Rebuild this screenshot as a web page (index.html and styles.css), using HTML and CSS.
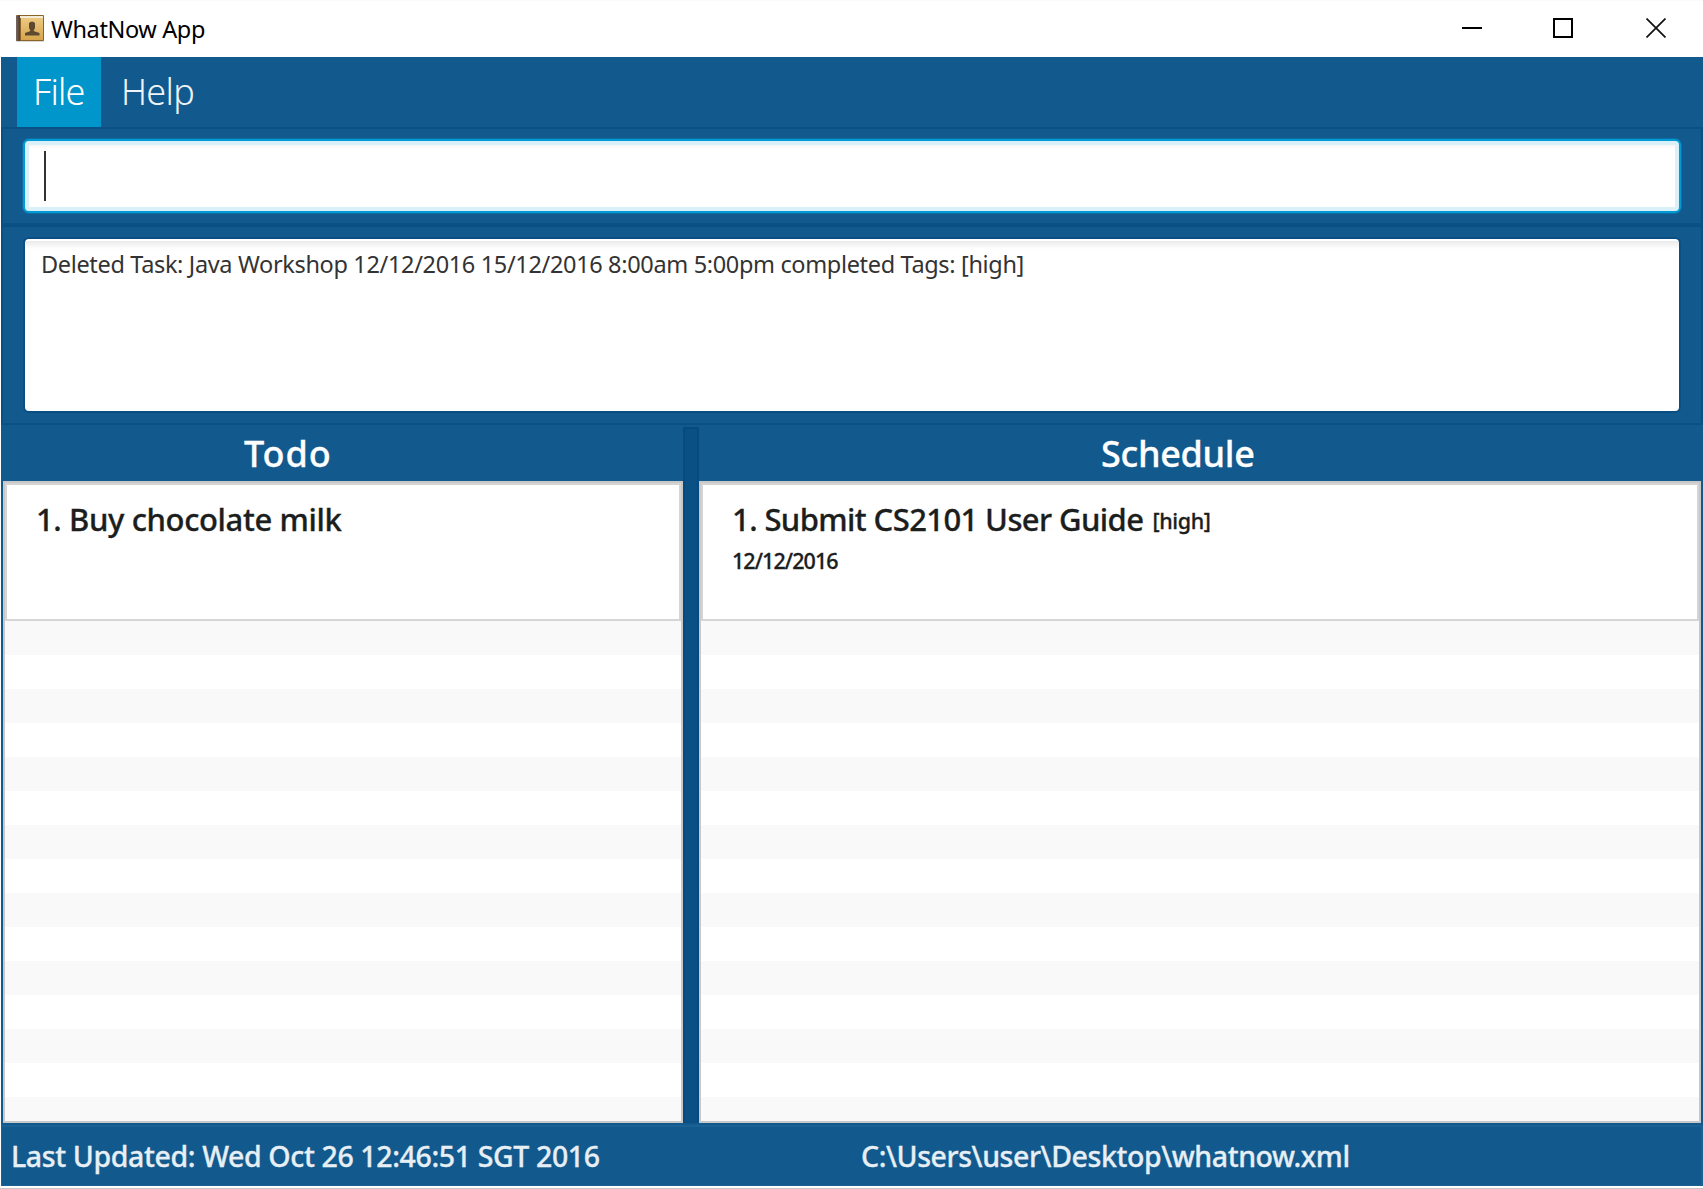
FILE: index.html
```
<!DOCTYPE html>
<html lang="en">
<head>
<meta charset="utf-8">
<title>WhatNow App</title>
<link rel="stylesheet" href="styles.css">
</head>
<body>
<div class="window">
  <header class="titlebar">
    <svg class="app-icon" width="30" height="30" viewBox="0 0 30 30" aria-hidden="true">
      <defs>
        <linearGradient id="cover" x1="0" y1="0" x2="0" y2="1">
          <stop offset="0" stop-color="#ecc981"/><stop offset="1" stop-color="#d6a54e"/>
        </linearGradient>
        <linearGradient id="spine" x1="0" y1="0" x2="1" y2="0">
          <stop offset="0" stop-color="#7b695f"/><stop offset="1" stop-color="#4c3b32"/>
        </linearGradient>
      </defs>
      <rect x="1" y="25" width="28" height="3" rx="1" fill="#d9d9d9"/>
      <rect x="1" y="1" width="28" height="26" rx="1" fill="#8a6426"/>
      <rect x="5" y="2" width="23" height="2" fill="#f3ead8"/>
      <rect x="6" y="4" width="22" height="22" fill="url(#cover)"/>
      <path d="M1 2l4-1v26H2l-1-1z" fill="url(#spine)"/>
      <path d="M14 9q3-3 6 0v5l-1.500 3 6 2v2.500H10V19l5.500-2-1.500-3z" fill="#5c4a30"/>
    </svg>
    <h1 class="title">WhatNow App</h1>
    <div class="controls">
      <svg width="20" height="20" viewBox="0 0 20 20"><path d="M0 10h20" stroke="#000" stroke-width="2"/></svg>
      <svg width="20" height="20" viewBox="0 0 20 20"><path d="M1 1h18v18H1z" fill="none" stroke="#000" stroke-width="2"/></svg>
      <svg width="20" height="20" viewBox="0 0 20 20"><path d="M.5.5l19 19M19.500.5l-19 19" stroke="#111" stroke-width="1.700"/></svg>
    </div>
  </header>
  <div class="content">
    <nav class="menubar">
      <span class="menu active">File</span>
      <span class="menu help">Help</span>
    </nav>
    <section class="pane command"><div class="field"><span class="caret"></span></div></section>
    <section class="pane result"><div class="message">Deleted Task: Java Workshop 12/12/2016 15/12/2016 8:00am 5:00pm completed Tags: [high]</div></section>
    <main class="split">
      <section class="column todo">
        <h2 class="heading">Todo</h2>
        <div class="list">
          <article class="card"><div class="line"><span class="name">1. Buy chocolate milk</span></div></article>
        </div>
      </section>
      <div class="divider"></div>
      <section class="column schedule">
        <h2 class="heading">Schedule</h2>
        <div class="list">
          <article class="card">
            <div class="line"><span class="name">1. Submit CS2101 User Guide</span><span class="tag">[high]</span></div>
            <div class="date">12/12/2016</div>
          </article>
        </div>
      </section>
    </main>
    <footer class="status">
      <span class="updated">Last Updated: Wed Oct 26 12:46:51 SGT 2016</span>
      <span class="path">C:\Users\user\Desktop\whatnow.xml</span>
    </footer>
  </div>
</div>
</body>
</html>
```
FILE: styles.css
```
* { box-sizing: border-box; }
body { margin: 0; background: #fff; font-family: "Noto Sans", "Open Sans", sans-serif; }
h1, h2 { margin: 0; font-weight: inherit; }
svg { display: block; }

.window { width: 1703px; height: 1189px; display: flex; flex-direction: column; white-space: nowrap; overflow: hidden; border-top: 1px solid #fafafa; border-bottom: 1px solid #c6c6c6; }
.titlebar { height: 56px; flex: none; display: flex; padding-left: 15px; }
.app-icon { margin-top: 13px; }
.title { margin-left: 6px; font-size: 23.5px; line-height: 57px; letter-spacing: -0.38px; color: #000; }
.controls { margin: 17px 37px 0 auto; display: flex; gap: 71px; }
.controls svg:last-child { margin-left: 2px; }

.content { flex: none; height: 1129px; margin-left: 1px; display: flex; flex-direction: column; background: #125a8e; border-bottom: 1px solid #1a6090; }
.menubar { height: 70px; flex: none; display: flex; padding-left: 16px; font-size: 36px; font-weight: 300; line-height: 70px; letter-spacing: -0.8px; color: #eef4f8; }
.menu { padding-left: 16px; width: 84px; }
.active { background: #0096cb; color: #fff; }
.help { padding-left: 20px; letter-spacing: -0.7px; }

.pane { flex: none; border: 2px solid #0a5085; padding: 10px 20px; }
.command { height: 98px; }
.field { height: 74px; border: 2px solid #009bd4; border-radius: 6px; background: #fff; box-shadow: 0 0 0 1px #0d6da3, inset 0 0 0 4px #daf1fa, inset 0 7px 3px -1px #f6f6f6; padding: 10px 0 0 19px; }
.caret { display: block; width: 2px; height: 50px; background: #333; }
.result { height: 200px; }
.message { height: 176px; border: 2px solid #0a4f84; border-radius: 6px; background: linear-gradient(#fff 2px, #ebebeb 2px, #fff 10px); padding: 9px 0 0 16px; font-size: 23.5px; line-height: 32px; letter-spacing: -0.34px; color: #333; }

.split { flex: none; height: 698px; display: flex; padding: 0 2px; }
.column { display: flex; flex-direction: column; }
.todo { width: 680px; }
.schedule { width: 1002px; }
.divider { width: 16px; margin-top: 2px; background: #0a5085; border: 2px solid #064a80; border-bottom: 0; }
.heading { height: 56px; font-size: 36px; font-weight: 500; line-height: 58px; color: #fff; -webkit-text-stroke: 0.3px; }
.todo .heading { padding-left: 241px; letter-spacing: 0.9px; }
.schedule .heading { padding-left: 402px; letter-spacing: -0.3px; }
.list { height: 642px; border: 2px solid #c8c8c8; background: repeating-linear-gradient(#fff 0 34px, #f9f9f9 34px 68px) 0 104px; }
.card { height: 138px; border: 2px solid #d5d5d5; background: #fff; padding: 13px 0 0 29px; color: #1c1e1e; font-weight: 500; -webkit-text-stroke: 0.3px; }
.line { display: flex; height: 42px; line-height: 42px; font-size: 31px; }
.name { letter-spacing: -0.38px; }
.schedule .name { letter-spacing: -0.6px; }
.tag { margin-left: 9px; padding-top: 1px; font-size: 21.5px; line-height: 44px; letter-spacing: -0.35px; }
.date { margin-top: 5px; line-height: 32px; font-size: 21.5px; letter-spacing: -0.93px; }

.status { flex: none; height: 61px; display: flex; border: 2px solid #1a6294; border-bottom: 0; border-left-width: 1px; margin-top: 2px; font-size: 28.5px; font-weight: 500; line-height: 58px; letter-spacing: -0.38px; color: #e7eef4; -webkit-text-stroke: 0.3px; }
.updated { width: 850px; padding-left: 9px; }
.path { padding-left: 9px; letter-spacing: -0.42px; }
```
